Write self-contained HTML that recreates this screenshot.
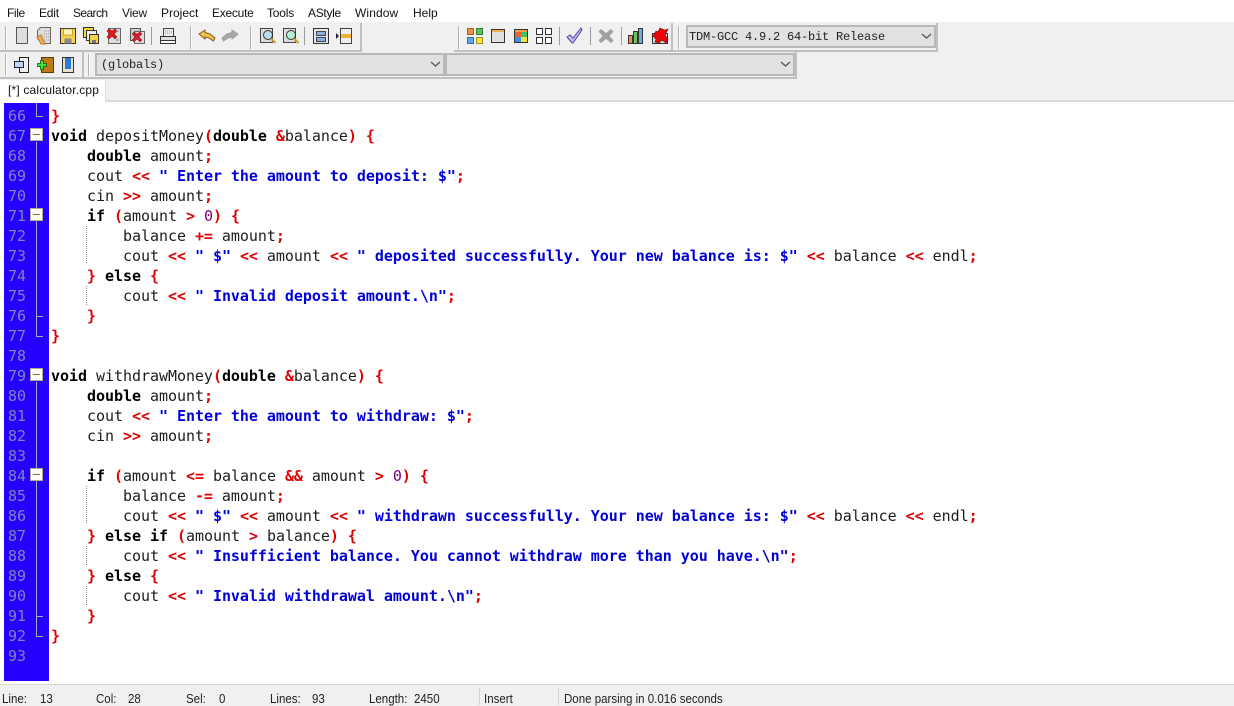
<!DOCTYPE html>
<html><head><meta charset="utf-8">
<style>
html,body{margin:0;padding:0;width:1234px;height:705px;overflow:hidden;background:#f0f0f0}
*{box-sizing:border-box}
.a{position:absolute}
.m{position:absolute;top:5px;font:12px/16px "Liberation Sans",sans-serif;color:#111;transform-origin:0 0;white-space:nowrap}
.tb{position:absolute;background:#f0f0f0;border-right:2px solid #c0c0c0;border-bottom:2px solid #c0c0c0}
.h{position:absolute;width:2px;border-left:1px solid #b0b0b0;border-right:1px solid #fff}
.combo{position:absolute;background:#e1e1e1;border:2px solid #b8b8b8;font:12px/18px "Liberation Mono",monospace;letter-spacing:-.2px;color:#222;padding-left:4px;white-space:pre}
#ed{position:absolute;left:0;top:102px;width:1234px;height:582px;background:#fff}
#gut{position:absolute;left:4px;top:1px;width:45px;height:578px;background:#2400ff}
.n{position:absolute;left:8px;font:15px/20px "DejaVu Sans Mono",monospace;color:#8484b4;letter-spacing:-.035px}
.l{position:absolute;left:51px;font:15px/20px "DejaVu Sans Mono",monospace;color:#1c1c1c;white-space:pre;letter-spacing:-.035px}
.l b{font-weight:bold;color:#000}
.l i{font-style:normal;font-weight:bold;color:#e00000}
.l u{text-decoration:none;font-weight:bold;color:#0000d8}
.l s{text-decoration:none;color:#800080}
.fb{position:absolute;left:30px;width:13px;height:13px;background:#fff;border:1px solid #b9a98e}
.fb:after{content:"";position:absolute;left:2px;top:5px;width:7px;height:1px;background:#8a6a30}
.fl{position:absolute;left:36px;width:1px;background:#b0a8b8}
.ft{position:absolute;left:36px;width:7px;height:1px;background:#b0a8b8}
.g{position:absolute;left:86px;width:1px;background-image:linear-gradient(#888 50%,transparent 50%);background-size:1px 2px}
.s{position:absolute;top:691px;font:13px/15px "Liberation Sans",sans-serif;color:#222;transform:scaleX(.885);transform-origin:0 0;white-space:pre}
</style></head><body>

<div class="a" style="left:0;top:0;width:1234px;height:22px;background:#fff"></div>
<span class="m" style="left:7px;letter-spacing:-.4px">File</span>
<span class="m" style="left:39px;letter-spacing:-.2px">Edit</span>
<span class="m" style="left:73px;letter-spacing:-.6px">Search</span>
<span class="m" style="left:122px;letter-spacing:-.2px">View</span>
<span class="m" style="left:161px">Project</span>
<span class="m" style="left:212px;letter-spacing:-.25px">Execute</span>
<span class="m" style="left:267px;letter-spacing:-.2px">Tools</span>
<span class="m" style="left:308px;letter-spacing:-.3px">AStyle</span>
<span class="m" style="left:355px;letter-spacing:.1px">Window</span>
<span class="m" style="left:413px">Help</span>

<div class="tb" style="left:0;top:23px;width:362px;height:29px"></div>
<div class="tb" style="left:0;top:52px;width:84px;height:27px"></div>
<div class="tb" style="left:84px;top:52px;width:713px;height:27px"></div>
<div class="tb" style="left:454px;top:23px;width:219px;height:29px"></div>
<div class="tb" style="left:673px;top:23px;width:265px;height:29px"></div>

<div class="h" style="left:5px;top:26px;height:23px"></div>
<div class="h" style="left:190px;top:26px;height:23px"></div>
<div class="h" style="left:250px;top:26px;height:23px"></div>
<div class="h" style="left:5px;top:54px;height:22px"></div>
<div class="h" style="left:88px;top:54px;height:22px"></div>
<div class="h" style="left:458px;top:26px;height:23px"></div>
<div class="h" style="left:678px;top:26px;height:23px"></div>

<div class="combo" style="left:686px;top:25px;width:250px;height:23px;line-height:20px;padding-left:1px">TDM-GCC 4.9.2 64-bit Release</div>
<div class="combo" style="left:95px;top:53px;width:350px;height:23px;line-height:20px">(globals)</div>
<div class="combo" style="left:445px;top:53px;width:350px;height:23px"></div>

<svg class="a" style="left:0;top:0" width="1234" height="80" viewBox="0 0 1234 80">
<g fill="none" stroke="#555" stroke-width="1.3">
<path d="M922 34l4.500 4 4.500-4"/><path d="M431 62l4.500 4 4.500-4"/><path d="M781 62l4.500 4 4.500-4"/>
</g>
<g stroke="#9a9a9a" stroke-width="1">
<path d="M151.500 27v18M304.500 27v18M559.500 27v18M590.500 27v18M621.500 27v18"/>
</g>
<!-- new -->
<rect x="16.500" y="27.500" width="11" height="16" fill="#dedede" stroke="#555"/>
<!-- open -->
<path d="M40.500 27.500h10v16h-9l-4-5v-8z" fill="#ddd" stroke="#666"/><path d="M37 37l4-2 4 9h-4z" fill="#eeb060" stroke="#c07820"/>
<path d="M44 31h5M44 34h5M44 37h5M44 40h5" stroke="#999" stroke-dasharray="1 1"/>
<!-- save -->
<rect x="60.500" y="28.500" width="15" height="15" fill="#f4d24a" stroke="#333"/><rect x="63.500" y="29" width="9" height="6" fill="#fff4b0" stroke="#a08020" stroke-width=".6"/><rect x="64.500" y="38.500" width="7" height="5" fill="#888"/>
<!-- save all -->
<rect x="83.500" y="27.500" width="10" height="10" fill="#f4d24a" stroke="#333"/><rect x="86.500" y="30.500" width="10" height="10" fill="#eee" stroke="#333"/><rect x="89.500" y="34.500" width="9" height="9" fill="#f4d24a" stroke="#333"/><rect x="92" y="40" width="4" height="3" fill="#777"/>
<!-- close -->
<rect x="108.500" y="28.500" width="12" height="15" fill="#ddd" stroke="#666"/><path d="M109 34l3 3-3 3 2 2 3-3 3 3 2-2-3-3 3-3-2-2-3 2-3-2z" transform="translate(-2 -3)" fill="#e01818" stroke="#901010" stroke-width=".6"/><path d="M116 31h3M116 40h3" stroke="#888"/>
<!-- close all -->
<rect x="130.500" y="28.500" width="10" height="12" fill="#ccc" stroke="#555"/><rect x="134.500" y="31.500" width="10" height="12" fill="#ddd" stroke="#666"/><path d="M132 35l3 3-3 3 2 2 3-3 3 3 2-2-3-3 3-3-2-2-3 2-3-2z" fill="#d02030" stroke="#801018" stroke-width=".5" transform="translate(0 -1)"/>
<!-- print -->
<path d="M163.500 28.500h10v8h-10z" fill="#eee" stroke="#444"/><path d="M165 31h7M165 33h7" stroke="#999" stroke-dasharray="1 1"/><rect x="160.500" y="36.500" width="15" height="4" fill="#e0e0e0" stroke="#333"/><rect x="160.500" y="40.500" width="15" height="3" fill="#fff" stroke="#333"/>
<!-- undo -->
<path d="M199 34l6-4v2.500l5 1.500 5 4-1.500 3-4.500-3-4-1v2z" fill="#f0c050" stroke="#8a5a20"/>
<!-- redo -->
<path d="M238 34l-6-4v2.500l-5 1.500-5 4 1.500 3 4.500-3 4-1v2z" fill="#a8a8a8" stroke="#a0a0a0"/>
<!-- find -->
<rect x="260.500" y="28.500" width="12" height="14" fill="#ddd" stroke="#444"/><circle cx="268" cy="35" r="4.500" fill="#b8dcf0" stroke="#333"/><path d="M271 38.500l4.500 4.500" stroke="#d09a30" stroke-width="2.200"/>
<!-- find2 -->
<rect x="283.500" y="28.500" width="12" height="14" fill="#ddd" stroke="#444"/><circle cx="291" cy="35" r="4.500" fill="#b8f0d8" stroke="#333"/><path d="M294 38.500l4.500 4.500" stroke="#d09a30" stroke-width="2.200"/>
<!-- panel -->
<rect x="313.500" y="28.500" width="15" height="15" fill="#e4e4e4" stroke="#333"/><rect x="316.500" y="31.500" width="9" height="4" fill="#88aee0" stroke="#445"/><rect x="316.500" y="37.500" width="9" height="4" fill="#88aee0" stroke="#445"/>
<!-- goto -->
<path d="M336 33l3 3-3 3z" fill="#222"/><rect x="340.500" y="28.500" width="11" height="15" fill="#eee" stroke="#444"/><rect x="341" y="34" width="10" height="4" fill="#f0b030"/>

<!-- row 2 -->
<rect x="19.500" y="57.500" width="9" height="15" fill="#eee" stroke="#222"/><rect x="14.500" y="61.500" width="9" height="6" fill="#bcd4f0" stroke="#224"/>
<rect x="41.500" y="57.500" width="12" height="15" fill="#c07818" stroke="#5a3a10"/><path d="M41 60h3v3h3v3h-3v3h-3v-3h-3v-3h3z" transform="translate(-0.500 .5)" fill="#40e040" stroke="#106010" stroke-width=".8"/>
<rect x="62.500" y="57.500" width="11" height="15" fill="#eadfc8" stroke="#333"/><rect x="65" y="58" width="6" height="11" fill="#2a7ad0"/>

<!-- toolbar 3 -->
<rect x="467.500" y="28.500" width="6" height="6" fill="#f09040" stroke="#a06020"/><rect x="476.500" y="28.500" width="6" height="6" fill="#60c060" stroke="#308030"/><rect x="467.500" y="37.500" width="6" height="6" fill="#60a8e8" stroke="#3070a0"/><rect x="476.500" y="37.500" width="6" height="6" fill="#f8e840" stroke="#a09020"/>
<rect x="491.500" y="29.500" width="13" height="13" fill="#e0e0e0" stroke="#333"/><rect x="492" y="30" width="12" height="2" fill="#f0b050"/>
<rect x="514.500" y="29.500" width="13" height="13" fill="#fff" stroke="#333"/><rect x="515" y="30" width="12" height="2" fill="#f0a040"/><rect x="515" y="32" width="6" height="5" fill="#f06030"/><rect x="521" y="32" width="6" height="5" fill="#40c060"/><rect x="515" y="37" width="6" height="5" fill="#4090e0"/><rect x="521" y="37" width="6" height="5" fill="#f0e040"/>
<rect x="536.500" y="28.500" width="6" height="6" fill="#fff" stroke="#333"/><rect x="545.500" y="28.500" width="6" height="6" fill="#fff" stroke="#333"/><rect x="536.500" y="37.500" width="6" height="6" fill="#fff" stroke="#333"/><rect x="545.500" y="37.500" width="6" height="6" fill="#fff" stroke="#333"/>
<path d="M567 37l3-2 3 3 8-10 1 2-9 13h-1z" fill="#c8b8f0" stroke="#5a40a8"/>
<path d="M601 29l5 4 5-4 2.500 2.500-4 4.500 4 4.500-2.500 2.500-5-4-5 4-2.500-2.500 4-4.500-4-4.500z" fill="#a0a0a0"/>
<rect x="628.500" y="35.500" width="4" height="8" fill="#f09040" stroke="#333"/><rect x="633.500" y="31.500" width="4" height="12" fill="#70c060" stroke="#333"/><rect x="638.500" y="28.500" width="4" height="15" fill="#70a8e8" stroke="#333"/>
<rect x="652.500" y="33.500" width="15" height="10" fill="#ddd" stroke="#333"/><path d="M653 36l3-5 2 1 2-4 2 1 3 1 3-1-3 6 3 4-2 4-4-3-3 3-4-1 1-3z" fill="#e80808" stroke="#700" stroke-width=".6"/>
</svg>

<div class="a" style="left:0;top:79px;width:1234px;height:23px;background:#f0f0f0;border-bottom:2px solid #dcdcdc"></div>
<div class="a" style="left:0;top:80px;width:106px;height:22px;background:#fff;border-right:1px solid #dcdcdc"></div>
<span class="m" style="left:8px;top:82px;letter-spacing:.17px">[*] calculator.cpp</span>

<div id="ed"><div id="gut"></div></div>

<span class="n" style="top:106px">66</span><span class="n" style="top:126px">67</span><span class="n" style="top:146px">68</span><span class="n" style="top:166px">69</span><span class="n" style="top:186px">70</span><span class="n" style="top:206px">71</span><span class="n" style="top:226px">72</span><span class="n" style="top:246px">73</span><span class="n" style="top:266px">74</span><span class="n" style="top:286px">75</span><span class="n" style="top:306px">76</span><span class="n" style="top:326px">77</span><span class="n" style="top:346px">78</span><span class="n" style="top:366px">79</span><span class="n" style="top:386px">80</span><span class="n" style="top:406px">81</span><span class="n" style="top:426px">82</span><span class="n" style="top:446px">83</span><span class="n" style="top:466px">84</span><span class="n" style="top:486px">85</span><span class="n" style="top:506px">86</span><span class="n" style="top:526px">87</span><span class="n" style="top:546px">88</span><span class="n" style="top:566px">89</span><span class="n" style="top:586px">90</span><span class="n" style="top:606px">91</span><span class="n" style="top:626px">92</span><span class="n" style="top:646px">93</span>

<div class="fl" style="top:103px;height:13px"></div><div class="ft" style="top:116px"></div>
<div class="fl" style="top:142px;height:194px"></div><div class="ft" style="top:316px"></div><div class="ft" style="top:336px"></div>
<div class="fl" style="top:382px;height:254px"></div><div class="ft" style="top:616px"></div><div class="ft" style="top:636px"></div>
<div class="fb" style="top:128px"></div><div class="fb" style="top:208px"></div><div class="fb" style="top:368px"></div><div class="fb" style="top:468px"></div>

<div class="g" style="top:226px;height:38px"></div>
<div class="g" style="top:286px;height:20px"></div>
<div class="g" style="top:486px;height:38px"></div>
<div class="g" style="top:546px;height:20px"></div>
<div class="g" style="top:586px;height:20px"></div>

<div class="l" style="top:106px"><i>}</i></div>
<div class="l" style="top:126px"><b>void</b> depositMoney<i>(</i><b>double</b> <i>&amp;</i>balance<i>)</i> <i>{</i></div>
<div class="l" style="top:146px">    <b>double</b> amount<i>;</i></div>
<div class="l" style="top:166px">    cout <i>&lt;&lt;</i> <u>" Enter the amount to deposit: $"</u><i>;</i></div>
<div class="l" style="top:186px">    cin <i>&gt;&gt;</i> amount<i>;</i></div>
<div class="l" style="top:206px">    <b>if</b> <i>(</i>amount <i>&gt;</i> <s>0</s><i>)</i> <i>{</i></div>
<div class="l" style="top:226px">        balance <i>+=</i> amount<i>;</i></div>
<div class="l" style="top:246px">        cout <i>&lt;&lt;</i> <u>" $"</u> <i>&lt;&lt;</i> amount <i>&lt;&lt;</i> <u>" deposited successfully. Your new balance is: $"</u> <i>&lt;&lt;</i> balance <i>&lt;&lt;</i> endl<i>;</i></div>
<div class="l" style="top:266px">    <i>}</i> <b>else</b> <i>{</i></div>
<div class="l" style="top:286px">        cout <i>&lt;&lt;</i> <u>" Invalid deposit amount.\n"</u><i>;</i></div>
<div class="l" style="top:306px">    <i>}</i></div>
<div class="l" style="top:326px"><i>}</i></div>
<div class="l" style="top:366px"><b>void</b> withdrawMoney<i>(</i><b>double</b> <i>&amp;</i>balance<i>)</i> <i>{</i></div>
<div class="l" style="top:386px">    <b>double</b> amount<i>;</i></div>
<div class="l" style="top:406px">    cout <i>&lt;&lt;</i> <u>" Enter the amount to withdraw: $"</u><i>;</i></div>
<div class="l" style="top:426px">    cin <i>&gt;&gt;</i> amount<i>;</i></div>
<div class="l" style="top:466px">    <b>if</b> <i>(</i>amount <i>&lt;=</i> balance <i>&amp;&amp;</i> amount <i>&gt;</i> <s>0</s><i>)</i> <i>{</i></div>
<div class="l" style="top:486px">        balance <i>-=</i> amount<i>;</i></div>
<div class="l" style="top:506px">        cout <i>&lt;&lt;</i> <u>" $"</u> <i>&lt;&lt;</i> amount <i>&lt;&lt;</i> <u>" withdrawn successfully. Your new balance is: $"</u> <i>&lt;&lt;</i> balance <i>&lt;&lt;</i> endl<i>;</i></div>
<div class="l" style="top:526px">    <i>}</i> <b>else</b> <b>if</b> <i>(</i>amount <i>&gt;</i> balance<i>)</i> <i>{</i></div>
<div class="l" style="top:546px">        cout <i>&lt;&lt;</i> <u>" Insufficient balance. You cannot withdraw more than you have.\n"</u><i>;</i></div>
<div class="l" style="top:566px">    <i>}</i> <b>else</b> <i>{</i></div>
<div class="l" style="top:586px">        cout <i>&lt;&lt;</i> <u>" Invalid withdrawal amount.\n"</u><i>;</i></div>
<div class="l" style="top:606px">    <i>}</i></div>
<div class="l" style="top:626px"><i>}</i></div>

<div class="a" style="left:0;top:684px;width:1234px;height:21px;background:#f0f0f0;border-top:1px solid #d8d8d8"></div>
<div class="a" style="left:479px;top:688px;width:1px;height:17px;background:#d0d0d0"></div>
<div class="a" style="left:558px;top:688px;width:1px;height:17px;background:#d0d0d0"></div>
<span class="s" style="left:2px">Line:</span><span class="s" style="left:40px">13</span>
<span class="s" style="left:96px">Col:</span><span class="s" style="left:128px">28</span>
<span class="s" style="left:186px">Sel:</span><span class="s" style="left:219px">0</span>
<span class="s" style="left:270px">Lines:</span><span class="s" style="left:312px">93</span>
<span class="s" style="left:369px">Length:</span><span class="s" style="left:414px">2450</span>
<span class="s" style="left:484px">Insert</span>
<span class="s" style="left:564px">Done parsing in 0.016 seconds</span>
</body></html>
